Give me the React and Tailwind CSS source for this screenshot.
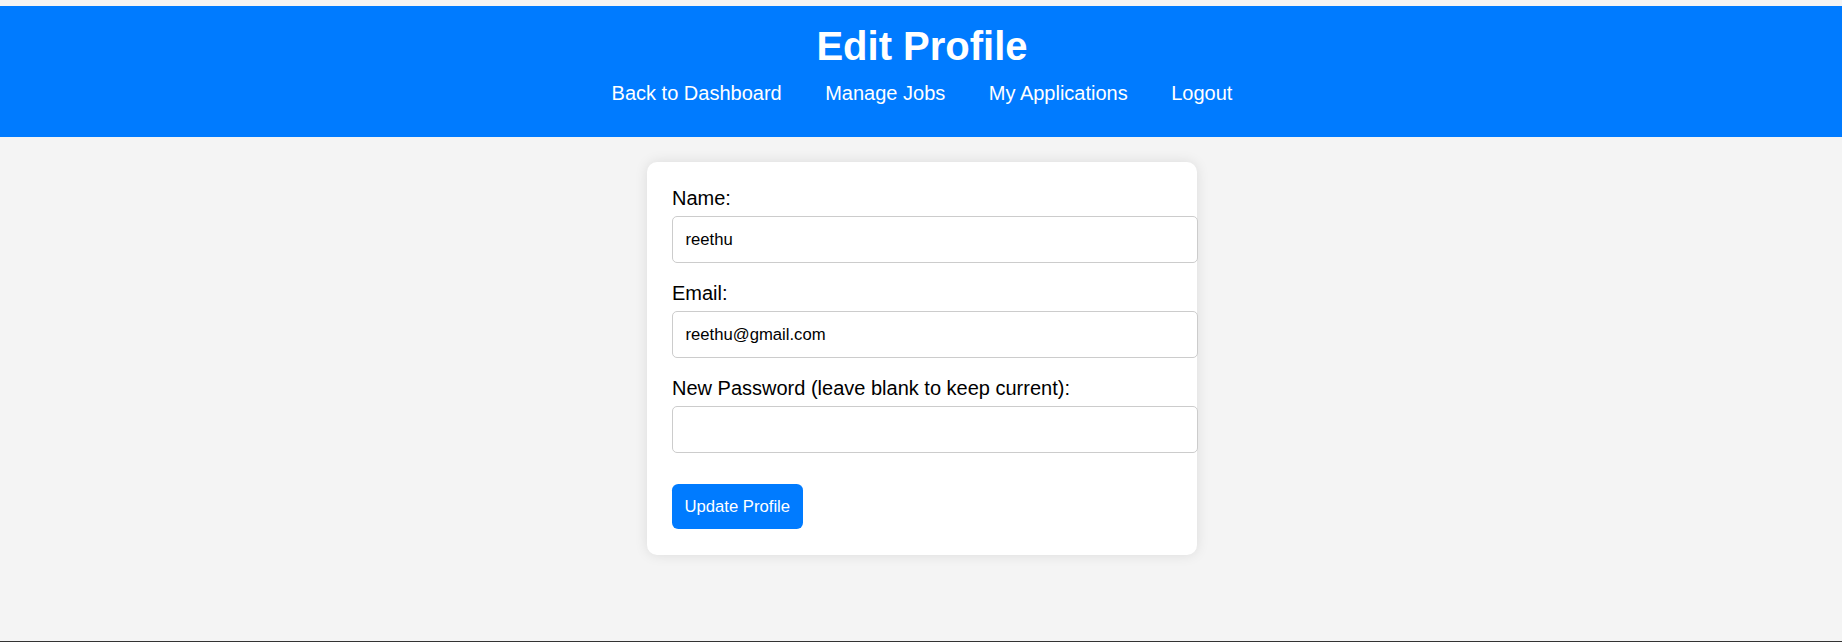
import { useState } from 'react';

const links = ['Back to Dashboard', 'Manage Jobs', 'My Applications', 'Logout'];

const Field = ({ label, type = 'text', value, onChange }) => (
  <div>
    <label className="block text-[20px] leading-[23px] mb-[6.25px] text-black">{label}</label>
    <input
      type={type}
      value={value}
      onChange={(e) => onChange(e.target.value)}
      className="block w-[526px] h-[47px] px-[12.5px] mb-[18.75px] border-[1.25px] border-[#ccc] rounded-[5px] bg-white text-[16.67px] text-black outline-none"
    />
  </div>
);

const App = () => {
  const [name, setName] = useState('reethu');
  const [email, setEmail] = useState('reethu@gmail.com');
  const [password, setPassword] = useState('');

  return (
    <div className="h-[642px] bg-[#f4f4f4] pt-[6px] flex flex-col font-['Liberation_Sans',Arial,sans-serif]">
      {/* Header */}
      <header className="bg-[#007bff] text-white text-center pt-[17px] pb-[19.75px] pl-[2px]">
        <h1 className="text-[40px] leading-[46px] font-bold">Edit Profile</h1>
        <nav className="flex justify-center gap-[43.5px]">
          {links.map((link) => (
            <a key={link} href="#" className="py-[12.5px] text-[20px] leading-[23px] text-white no-underline">
              {link}
            </a>
          ))}
        </nav>
      </header>

      {/* Form card */}
      <main className="flex-1 pt-[25px] pl-[2px]">
        <form
          onSubmit={(e) => e.preventDefault()}
          className="mx-auto w-[550px] bg-white rounded-[10px] shadow-[0_0_12.5px_rgba(0,0,0,0.1)] px-[25px] pt-[25px] pb-[26px]"
        >
          <Field label="Name:" value={name} onChange={setName} />
          <Field label="Email:" value={email} onChange={setEmail} />
          <Field
            label="New Password (leave blank to keep current):"
            type="password"
            value={password}
            onChange={setPassword}
          />
          <button
            type="submit"
            className="mt-[12.5px] h-[45px] px-[12.5px] rounded-[6.25px] bg-[#007bff] text-white text-[16.67px]"
          >
            Update Profile
          </button>
        </form>
      </main>

      <div className="h-px bg-[#333]" />
    </div>
  );
};

export default App;
